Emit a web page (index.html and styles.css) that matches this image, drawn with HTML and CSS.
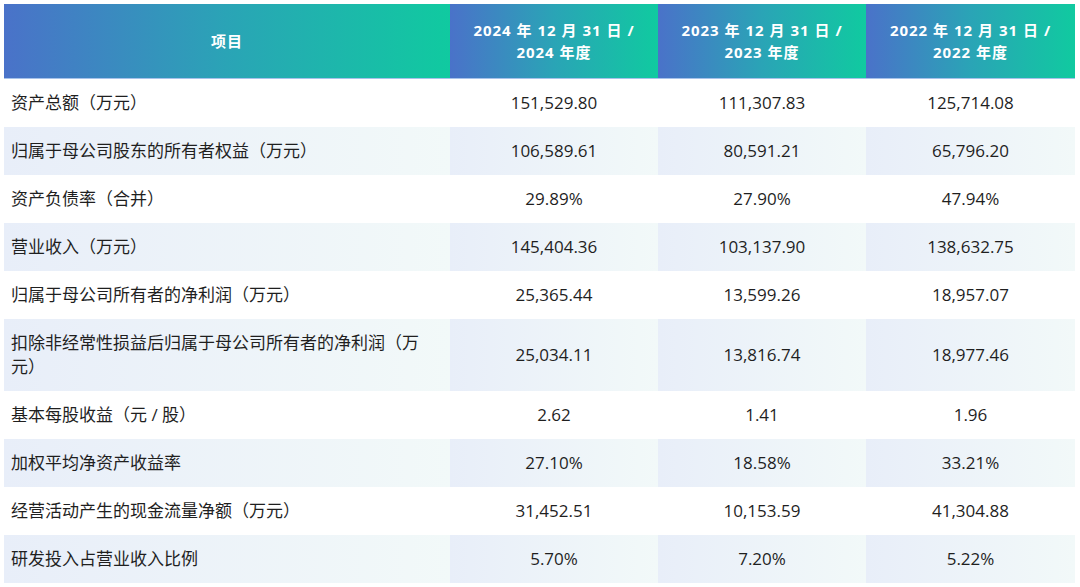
FILE: index.html
```html
<!DOCTYPE html>
<html lang="zh-CN">
<head>
<meta charset="utf-8">
<title>主要财务数据</title>
<link rel="stylesheet" href="styles.css">
</head>
<body>
<table class="fin">
  <colgroup>
    <col class="c-item">
    <col class="c-year">
    <col class="c-year">
    <col class="c-year-last">
  </colgroup>
  <thead>
    <tr>
      <th>项目</th>
      <th>2024 年 12 月 31 日 /<br>2024 年度</th>
      <th>2023 年 12 月 31 日 /<br>2023 年度</th>
      <th>2022 年 12 月 31 日 /<br>2022 年度</th>
    </tr>
  </thead>
  <tbody>
    <tr><td>资产总额（万元）</td><td>151,529.80</td><td>111,307.83</td><td>125,714.08</td></tr>
    <tr><td>归属于母公司股东的所有者权益（万元）</td><td>106,589.61</td><td>80,591.21</td><td>65,796.20</td></tr>
    <tr><td>资产负债率（合并）</td><td>29.89%</td><td>27.90%</td><td>47.94%</td></tr>
    <tr><td>营业收入（万元）</td><td>145,404.36</td><td>103,137.90</td><td>138,632.75</td></tr>
    <tr><td>归属于母公司所有者的净利润（万元）</td><td>25,365.44</td><td>13,599.26</td><td>18,957.07</td></tr>
    <tr class="tall"><td>扣除非经常性损益后归属于母公司所有者的净利润（万元）</td><td>25,034.11</td><td>13,816.74</td><td>18,977.46</td></tr>
    <tr><td>基本每股收益（元 / 股）</td><td>2.62</td><td>1.41</td><td>1.96</td></tr>
    <tr><td>加权平均净资产收益率</td><td>27.10%</td><td>18.58%</td><td>33.21%</td></tr>
    <tr><td>经营活动产生的现金流量净额（万元）</td><td>31,452.51</td><td>10,153.59</td><td>41,304.88</td></tr>
    <tr><td>研发投入占营业收入比例</td><td>5.70%</td><td>7.20%</td><td>5.22%</td></tr>
  </tbody>
</table>
</body>
</html>
```

FILE: styles.css
```css
html, body {
  margin: 0;
  padding: 0;
  background: #ffffff;
}

body {
  padding: 4px 4px 0 4px;
  font-family: "Open Sans", "Noto Sans CJK SC", sans-serif;
  color: #1f1f1f;
}

.fin {
  border-collapse: separate;
  border-spacing: 0;
  table-layout: fixed;
  width: 1071px;
}

.c-item { width: 446px; }
.c-year { width: 208px; }
.c-year-last { width: 209px; }

.fin th {
  height: 74px;
  padding: 0;
  background: linear-gradient(to right, #4a72c9, #2aa4b6 50%, #10caa0);
  border-bottom: 1px solid #a7c2ea;
  color: #ffffff;
  font-size: 15px;
  font-weight: 700;
  letter-spacing: 1px;
  line-height: 22px;
  text-align: center;
  vertical-align: middle;
}

.fin td {
  height: 48px;
  padding: 0;
  font-size: 17px;
  line-height: 24px;
  text-align: center;
  vertical-align: middle;
}

.fin td:first-child {
  text-align: left;
  padding: 0 30px 0 7px;
}

.fin tbody tr:nth-child(even) td {
  background: linear-gradient(to right, #e8eef9, #f2f9f9);
}

.fin tr.tall td {
  height: 72px;
}
```
